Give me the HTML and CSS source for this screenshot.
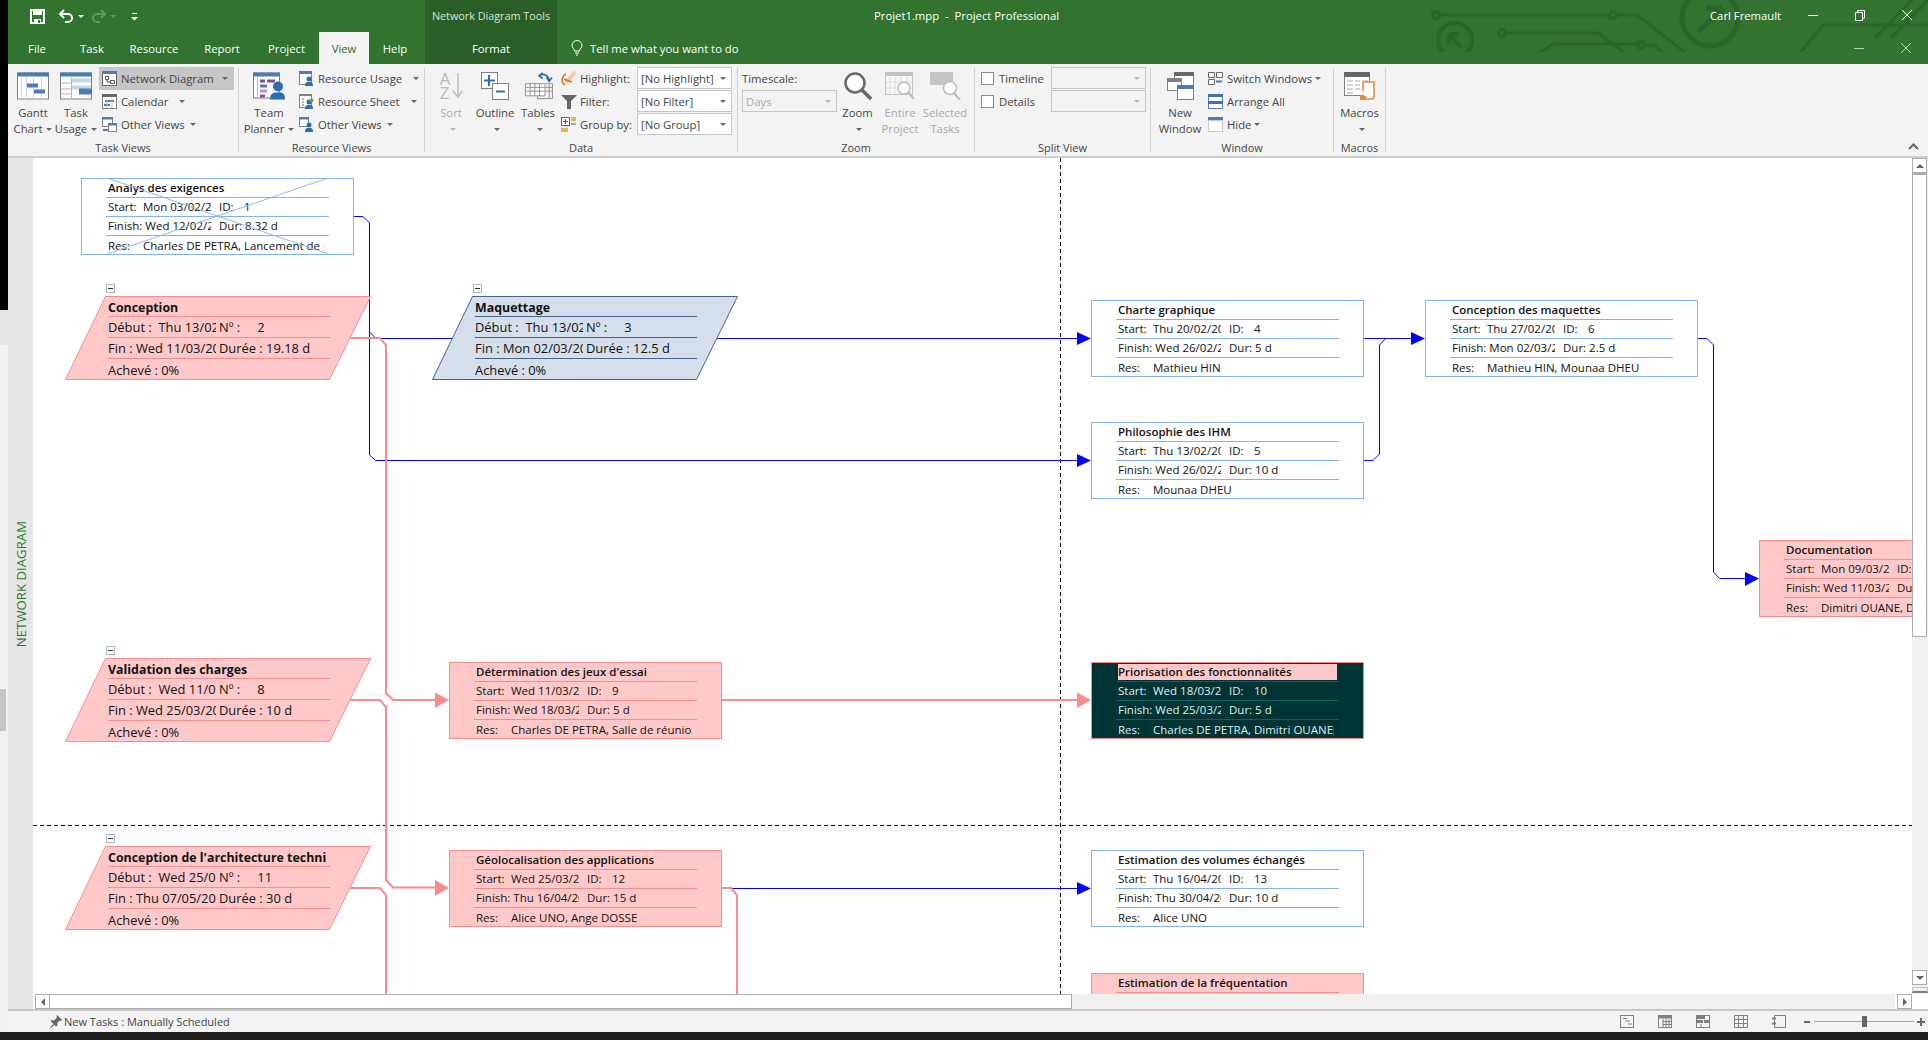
FILE: index.html
```html
<!DOCTYPE html>
<html lang="en">
<head>
<meta charset="utf-8">
<title>Projet1.mpp - Project Professional</title>
<link rel="stylesheet" href="styles.css">
</head>
<body>
<div class="screen">
  <div class="edge"><div class="edge-black"></div><div class="edge-pale"></div><div class="edge-thumb"></div></div>
  <div class="window">

    <!-- title bar + tabs -->
    <header class="chrome">
      <svg class="circuit" width="1920" height="52" viewBox="8 0 1920 52" fill="none" stroke="#2b652a" stroke-width="3">
        <circle cx="1436" cy="15" r="3.5"/><path d="M1440 15H1609"/><circle cx="1613" cy="15" r="3.5"/><path d="M1617 15H1637L1687 54"/>
        <circle cx="1455" cy="40" r="17" stroke-width="4"/><path d="M1449 34L1462 48M1449 34V44M1449 34H1459" stroke-width="4"/>
        <circle cx="1502" cy="33" r="3.5"/><path d="M1506 33H1598L1627 54"/>
        <path d="M1538 54L1553 44H1637"/><circle cx="1641" cy="45" r="3.5"/><path d="M1645 45H1654L1664 54"/>
        <circle cx="1710" cy="18" r="28" stroke-width="5"/><path d="M1698 32L1722 8M1722 8H1706M1722 8V22" stroke-width="5"/>
        <path d="M1799 54L1823 25H1928M1875 38L1912 0M1891 38L1928 0"/>
      </svg>
      <div class="qat">
        <svg class="qat-save" width="15" height="15" viewBox="0 0 15 15"><path d="M1 1H14V14H1Z" fill="none" stroke="#fff" stroke-width="2"/><path d="M3 1H12V6H3ZM4 10H11V14H4Z" fill="#fff"/><path d="M8 11H10V14H8Z" fill="#327231"/></svg>
        <svg class="qat-undo" width="15" height="14" viewBox="0 0 15 14" fill="none" stroke="#fff" stroke-width="2"><path d="M5 1L1 5L5 9M1 5H9A4 4 0 0 1 9 13H6"/></svg>
        <span class="caret caret-white"></span>
        <svg class="qat-redo" width="15" height="14" viewBox="0 0 15 14" fill="none" stroke="#5f9a5d" stroke-width="2"><path d="M10 1L14 5L10 9M14 5H6A4 4 0 0 0 6 13H9"/></svg>
        <span class="caret caret-dim"></span>
        <svg class="qat-more" width="7" height="9" viewBox="0 0 7 9" fill="#fff"><path d="M1 1H6V2H1ZM0 5H7L3.500 8.500Z"/></svg>
      </div>
      <nav class="tabs">
        <span class="tab">File</span><span class="tab">Task</span><span class="tab">Resource</span><span class="tab">Report</span><span class="tab">Project</span><span class="tab tab-on">View</span><span class="tab">Help</span>
      </nav>
      <div class="context">
        <div class="context-name">Network Diagram Tools</div>
        <div class="context-tab">Format</div>
      </div>
      <div class="title-row">
        <span class="doc-title">Projet1.mpp&nbsp; - &nbsp;Project Professional</span>
        <span class="user">Carl Fremault</span>
        <svg class="win-btn win-min" width="12" height="12" viewBox="0 0 12 12" stroke="#fff"><path d="M1 6.500H11"/></svg>
        <svg class="win-btn win-rest" width="12" height="12" viewBox="0 0 12 12" fill="none" stroke="#fff"><path d="M1.500 3.500H8.500V11.500H1.500ZM3.500 3.500V1.500H10.500V9H8.500"/></svg>
        <svg class="win-btn win-close" width="12" height="12" viewBox="0 0 12 12" stroke="#fff"><path d="M1 1L11 11M11 1L1 11"/></svg>
      </div>
      <div class="tell-row">
        <svg class="bulb" width="12" height="16" viewBox="0 0 12 16" fill="none" stroke="#fff"><path d="M3.500 11C3.500 8.500 1 8 1 5.500A5 5 0 0 1 11 5.500C11 8 8.500 8.500 8.500 11ZM4 13H8M5 15H7"/></svg>
        <span class="tell">Tell me what you want to do</span>
        <svg class="doc-min" width="12" height="12" viewBox="0 0 12 12" stroke="#b9cfb8"><path d="M1 6.500H11"/></svg>
        <svg class="doc-close" width="12" height="12" viewBox="0 0 12 12" stroke="#b9cfb8"><path d="M1 1L11 11M11 1L1 11"/></svg>
      </div>
    </header>

    <!-- ribbon -->
    <section class="ribbon">
      <div class="group g-task">
        <div class="group-body">
          <div class="big w50">
            <svg class="big-ico" width="32" height="27" viewBox="0 0 32 27"><rect x=".5" y=".5" width="31" height="26" fill="#fff" stroke="#808080"/><path d="M0 0H32V4H0Z" fill="#4a7db5"/><path d="M4.500 5V26M9.500 5V26M16.500 5V26M24.500 5V26" stroke="#c9d6e6"/><path d="M10 11H21V15H10ZM17 17H28V21H17Z" fill="#4a7db5"/></svg>
            <span class="big-label">Gantt<br>Chart<i class="caret"></i></span>
          </div>
          <div class="big w36">
            <svg class="big-ico" width="32" height="27" viewBox="0 0 32 27"><rect x=".5" y=".5" width="31" height="26" fill="#fff" stroke="#808080"/><path d="M0 0H32V4H0Z" fill="#4a7db5"/><path d="M12 6H31V10H12ZM12 13H31V17H12Z" fill="#c5d9ee"/><path d="M19 16H32V22H19Z" fill="#4a7db5"/><path d="M11.500 5V26M1 10.500H11M1 16.500H11M1 21.500H11" stroke="#b5b5b5"/></svg>
            <span class="big-label">Task<br>Usage<i class="caret"></i></span>
          </div>
          <div class="small-col w135 ml5">
            <div class="item item-on pl3">
              <svg width="15" height="15" viewBox="0 0 15 15"><rect x=".5" y=".5" width="14" height="14" fill="#fff" stroke="#666"/><path d="M0 0H15V3H0Z" fill="#4a7db5"/><path d="M3.500 5.500H6.500V8.500H3.500ZM8.500 9.500H12.500V12.500H8.500ZM5 9V11H8.500" fill="none" stroke="#555"/></svg>
              <span>Network Diagram</span><i class="caret push"></i>
            </div>
            <div class="item pl3">
              <svg width="15" height="15" viewBox="0 0 15 15"><rect x=".5" y=".5" width="14" height="14" fill="#fff" stroke="#808080"/><path d="M0 0H15V3H0Z" fill="#666"/><path d="M3 6H12V8H3ZM2 10H8V12H2Z" fill="#4a7db5"/><path d="M5 4V14M10 4V14" stroke="#bbb"/></svg>
              <span>Calendar</span><i class="caret sp10"></i>
            </div>
            <div class="item pl3">
              <svg width="15" height="15" viewBox="0 0 15 15"><rect x=".5" y=".5" width="10" height="9" fill="#fff" stroke="#808080"/><path d="M0 0H11V2.500H0Z" fill="#4a7db5"/><rect x="6.500" y="6.500" width="8" height="8" fill="#fff" stroke="#808080"/><path d="M6 6H15V8.500H6ZM1 12H6V14H1Z" fill="#4a7db5"/></svg>
              <span>Other Views</span><i class="caret sp4"></i>
            </div>
          </div>
        </div>
        <div class="group-label">Task Views</div>
      </div>

      <div class="group g-res">
        <div class="group-body">
          <div class="big w60">
            <svg class="big-ico" width="32" height="27" viewBox="0 0 32 27"><rect x=".5" y=".5" width="26" height="25" fill="#fff" stroke="#808080"/><path d="M0 0H27V4H0Z" fill="#4a7db5"/><path d="M7 7H12V10H7ZM14 7H22V10H14Z" fill="#7b4ea3"/><path d="M7 12H14V15H7Z" fill="#4a7db5"/><path d="M7 17H14V20H7Z" fill="#c98bd0"/><path d="M7 22H12V25H7Z" fill="#7b4ea3"/><path d="M4.500 5V25" stroke="#bbb"/><circle cx="25" cy="14" r="5" fill="#2f6cab"/><path d="M17 27C17 20 21 20 25 20S32 20 32 27Z" fill="#2f6cab"/></svg>
            <span class="big-label">Team<br>Planner<i class="caret"></i></span>
          </div>
          <div class="small-col back2 pl2">
            <div class="item">
              <svg width="15" height="15" viewBox="0 0 15 15"><rect x=".5" y=".5" width="12" height="13" fill="#fff" stroke="#808080"/><path d="M0 0H13V3H0Z" fill="#4a7db5"/><circle cx="10" cy="8" r="2.500" fill="#2f6cab"/><path d="M6 15C6 11 8 11 10 11S14 11 14 15Z" fill="#2f6cab"/></svg>
              <span>Resource Usage</span><i class="caret sp10"></i>
            </div>
            <div class="item">
              <svg width="15" height="15" viewBox="0 0 15 15"><rect x=".5" y=".5" width="12" height="13" fill="#fff" stroke="#808080"/><path d="M0 0H13V2H0Z" fill="#808080"/><circle cx="10" cy="8" r="2.500" fill="#2f6cab"/><circle cx="12.500" cy="6.500" r="2" fill="#5aa469"/><path d="M6 15C6 11 8 11 10 11S14 11 14 15Z" fill="#2f6cab"/><path d="M3 5H5M3 8H5M3 11H5" stroke="#666"/></svg>
              <span>Resource Sheet</span><i class="caret sp10"></i>
            </div>
            <div class="item">
              <svg width="15" height="15" viewBox="0 0 15 15"><rect x=".5" y=".5" width="9" height="9" fill="#fff" stroke="#808080"/><path d="M0 0H10V2.500H0Z" fill="#4a7db5"/><circle cx="10" cy="8" r="2.500" fill="#2f6cab"/><path d="M6 15C6 11 8 11 10 11S14 11 14 15Z" fill="#2f6cab"/></svg>
              <span>Other Views</span><i class="caret sp4"></i>
            </div>
          </div>
        </div>
        <div class="group-label">Resource Views</div>
      </div>

      <div class="group g-data">
        <div class="group-body">
          <div class="big w52 off">
            <svg class="big-ico" width="24" height="30" viewBox="0 0 24 30"><text x="0" y="14" class="az">A</text><text x="0" y="29" class="az">Z</text><path d="M19.500 1V26M14 20L19.500 27L24 20" fill="none" stroke="#b9b9b9" stroke-width="1.500"/></svg>
            <span class="big-label">Sort<br><i class="caret caret-off"></i></span>
          </div>
          <div class="big w36">
            <svg class="big-ico" width="28" height="28" viewBox="0 0 28 28"><rect x=".5" y=".5" width="16" height="16" fill="#fff" stroke="#808080"/><path d="M8 3V14M3 8.500H14" stroke="#2f6cab" stroke-width="2"/><rect x="11.500" y="11.500" width="16" height="16" fill="#fff" stroke="#808080"/><path d="M15 19.500H24" stroke="#2f6cab" stroke-width="2"/></svg>
            <span class="big-label">Outline<br><i class="caret"></i></span>
          </div>
          <div class="big w50">
            <svg class="big-ico" width="31" height="30" viewBox="0 0 31 30"><path d="M1.500 12.500H22.500V25.500H1.500ZM1.500 16.500H22.500M1.500 20.500H22.500M6.500 12.500V25.500M11.500 12.500V25.500M16.500 12.500V25.500" fill="#fff" stroke="#8c8c8c"/><path d="M23.500 12.500H30.500V28.500H14.500V25.500M23.500 16.500H30.500M23.500 20.500H30.500M27 13V28" fill="none" stroke="#8c8c8c"/><path d="M16 4C21 1 26 3 27 9M24 6L27 10L30 6M20 1L16 4L20 7" fill="none" stroke="#2f6cab" stroke-width="1.800"/></svg>
            <span class="big-label">Tables<br><i class="caret"></i></span>
          </div>
          <div class="small-col back2 w76">
            <div class="item tight">
              <svg width="16" height="15" viewBox="0 0 16 15" fill="none"><path d="M5 12L14 1" stroke="#f0c9a0" stroke-width="4"/><path d="M5 3C0 6 0 12 4 14" stroke="#e0702c" stroke-width="1.500"/><path d="M3 8L11 11" stroke="#e0702c" stroke-width="1.500"/></svg>
              <span>Highlight:</span>
            </div>
            <div class="item tight">
              <svg width="16" height="15" viewBox="0 0 16 15"><path d="M0 1H16L10 7V15H6V7Z" fill="#666"/></svg>
              <span>Filter:</span>
            </div>
            <div class="item tight">
              <svg width="16" height="15" viewBox="0 0 16 15"><rect x=".5" y=".5" width="8" height="8" fill="#fff" stroke="#666"/><path d="M4.500 2V7M2 4.500H7" stroke="#555"/><path d="M10 0H15V4H10ZM0 11H7V15H0Z" fill="#e5b45c"/><path d="M10 7H15" stroke="#555"/></svg>
              <span>Group by:</span>
            </div>
          </div>
          <div class="combo-col">
            <div class="combo on"><span>[No Highlight]</span><i class="caret push"></i></div>
            <div class="combo on"><span>[No Filter]</span><i class="caret push"></i></div>
            <div class="combo on"><span>[No Group]</span><i class="caret push"></i></div>
          </div>
        </div>
        <div class="group-label">Data</div>
      </div>

      <div class="group g-zoom">
        <div class="group-body">
          <div class="scale-col">
            <div class="item scale-label"><span>Timescale:</span></div>
            <div class="combo dis"><span>Days</span><i class="caret caret-off push"></i></div>
          </div>
          <div class="big w41">
            <svg class="big-ico" width="28" height="28" viewBox="0 0 28 28" fill="none"><circle cx="11" cy="11" r="9.500" stroke="#666" stroke-width="2.500" fill="#fff"/><path d="M18 18L27 27" stroke="#666" stroke-width="3.500"/></svg>
            <span class="big-label">Zoom<br><i class="caret"></i></span>
          </div>
          <div class="big w44 off">
            <svg class="big-ico" width="30" height="28" viewBox="0 0 30 28" fill="none"><rect x=".5" y=".5" width="27" height="22" fill="#f7f7f7" stroke="#c4c4c4"/><path d="M0 0H28V4H0Z" fill="#c4c4c4"/><path d="M5 5V22M10 5V22M16 5V22M22 5V22M1 10H27M1 16H27" stroke="#dedede"/><circle cx="19" cy="16" r="6" fill="#fff" stroke="#bdbdbd" stroke-width="1.500"/><path d="M23 20L29 27" stroke="#bdbdbd" stroke-width="2"/></svg>
            <span class="big-label">Entire<br>Project</span>
          </div>
          <div class="big w46 off">
            <svg class="big-ico" width="31" height="28" viewBox="0 0 31 28" fill="none"><path d="M0 0H23V13H0Z" fill="#c4c4c4"/><circle cx="20" cy="16" r="6.500" fill="#fff" stroke="#bdbdbd" stroke-width="1.500"/><path d="M24 21L30 28" stroke="#bdbdbd" stroke-width="2"/></svg>
            <span class="big-label">Selected<br>Tasks</span>
          </div>
        </div>
        <div class="group-label">Zoom</div>
      </div>

      <div class="group g-split">
        <div class="group-body">
          <div class="check-col">
            <div class="item"><i class="check"></i><span>Timeline</span></div>
            <div class="item"><i class="check"></i><span>Details</span></div>
          </div>
          <div class="combo-col">
            <div class="combo dis"><i class="caret caret-off push"></i></div>
            <div class="combo dis"><i class="caret caret-off push"></i></div>
          </div>
        </div>
        <div class="group-label">Split View</div>
      </div>

      <div class="group g-window">
        <div class="group-body">
          <div class="big w58">
            <svg class="big-ico" width="27" height="28" viewBox="0 0 27 28"><rect x="7.500" y=".5" width="19" height="14" fill="#fff" stroke="#808080"/><path d="M7 0H27V4H7Z" fill="#666"/><rect x=".5" y="6.500" width="14" height="12" fill="#fff" stroke="#808080"/><path d="M0 6H15V10H0Z" fill="#808080"/><rect x="10.500" y="13.500" width="16" height="14" fill="#fff" stroke="#808080"/><path d="M10 13H27V17H10Z" fill="#4a7db5"/></svg>
            <span class="big-label">New<br>Window</span>
          </div>
          <div class="small-col back1">
            <div class="item">
              <svg width="15" height="15" viewBox="0 0 15 15" fill="#fff" stroke="#666"><path d="M.5 1.500H6.500V6.500H.5ZM8.500 1.500H14.500V6.500H8.500ZM.5 8.500H6.500V13.500H.5Z"/><path d="M8 10.500H14" stroke="#4a7db5" stroke-width="2"/></svg>
              <span>Switch Windows</span><i class="caret sp2"></i>
            </div>
            <div class="item">
              <svg width="15" height="15" viewBox="0 0 15 15"><rect x=".5" y=".5" width="14" height="14" fill="#fff" stroke="#4a7db5"/><path d="M0 0H15V3H0ZM0 7H15V10H0Z" fill="#3d73ad"/></svg>
              <span>Arrange All</span>
            </div>
            <div class="item">
              <svg width="15" height="15" viewBox="0 0 15 15"><path d="M0 0H15V3H0Z" fill="#4a7db5"/><rect x=".5" y="3.500" width="14" height="11" fill="#fff" stroke="#999" stroke-dasharray="1 1"/></svg>
              <span>Hide</span><i class="caret sp2"></i>
            </div>
          </div>
        </div>
        <div class="group-label">Window</div>
      </div>

      <div class="group g-macros">
        <div class="group-body">
          <div class="big w51">
            <svg class="big-ico" width="31" height="28" viewBox="0 0 31 28"><rect x=".5" y=".5" width="25" height="23" fill="#fff" stroke="#808080"/><path d="M0 0H26V5H0Z" fill="#666"/><path d="M3 9H9M11 9H16M18 9H24M3 13H9M11 13H16M18 13H24M3 17H9M11 17H16M3 21H9" stroke="#aaa"/><path d="M19 19V12C19 10 20 10 21 10H30V24C30 26 29 27 27 27H17V24H20" fill="#fff" stroke="#e8893a" stroke-width="1.500"/><path d="M16 24H22V28H16Z" fill="#e8893a"/></svg>
            <span class="big-label">Macros<br><i class="caret"></i></span>
          </div>
        </div>
        <div class="group-label">Macros</div>
      </div>

      <svg class="collapse-ribbon" width="11" height="7" viewBox="0 0 11 7" fill="none" stroke="#666" stroke-width="2"><path d="M1 6L5.500 1.500L10 6"/></svg>
    </section>

    <!-- network diagram -->
    <main class="workspace">
      <div class="sidebar"><span class="sidebar-text">NETWORK DIAGRAM</span></div>
      <div class="work-col">
        <div class="view">
          <div class="canvas">
            <svg class="wires" width="1879" height="836" viewBox="33 158 1879 836" fill="none">
              <g stroke="#000" stroke-dasharray="4 3">
                <path d="M1060.500 158V994"/>
                <path d="M33 825.500H1912"/>
              </g>
              <g stroke="#0000ff">
                <path d="M353 216.500H363L369.500 223V455L375.500 460.500H1080"/>
                <path d="M369.500 332L376 338.500H453"/>
                <path d="M717 338.500H1080"/>
                <path d="M1364 338.500H1414"/>
                <path d="M1364 460.500H1373L1379.500 454V345L1385.500 338.500"/>
                <path d="M1698 338.500H1707L1713.500 345V572L1719.500 578.500H1748"/>
                <path d="M732 888.500H1080"/>
              </g>
              <g fill="#0000ff">
                <path d="M1077 332L1091 338.500L1077 345Z"/>
                <path d="M1077 454L1091 460.500L1077 467Z"/>
                <path d="M1411 332L1425 338.500L1411 345Z"/>
                <path d="M1745 572L1759 578.500L1745 586Z"/>
                <path d="M1077 882L1091 888.500L1077 895Z"/>
              </g>
              <g stroke="#f88b8b" stroke-width="2">
                <path d="M349 338H380L386 345V693L393 700H438"/>
                <path d="M349 700H380L386 707V880L393 887.500H438"/>
                <path d="M349 888H380L386 895V994"/>
                <path d="M722 700H1080"/>
                <path d="M722 888H731L737 895V994"/>
              </g>
              <g fill="#f88b8b">
                <path d="M435 692.500L449 700L435 708Z"/>
                <path d="M435 880L449 888L435 896Z"/>
                <path d="M1077 692.500L1091 700L1077 708Z"/>
              </g>
            </svg>

            <div class="node node-blue n-analys">
              <svg class="cross" width="221" height="76" viewBox="0 0 221 76" stroke="#8fbce9"><path d="M0 0L221 76M221 0L0 76"/></svg>
              <div class="row row-title">Analys des exigences</div>
              <div class="row"><span class="c1"><span class="lab">Start:</span> Mon 03/02/2020</span><span class="c2"><span class="lab">ID:</span> 1</span></div>
              <div class="row"><span class="c1"><span class="lab">Finish:</span> Wed 12/02/2020</span><span class="c2"><span class="lab">Dur:</span> 8.32 d</span></div>
              <div class="row"><span class="c-full"><span class="lab">Res:</span> Charles DE PETRA, Lancement de projet</span></div>
            </div>

            <div class="para para-red n-conception">
              <i class="minus"></i>
              <svg class="para-shape" width="306" height="84" viewBox="0 0 306 84"><path d="M40.500 .5H305.500L264.500 83.500H.5Z"/></svg>
              <div class="p-row p-title">Conception</div>
              <div class="p-row"><span class="p1">Début :&nbsp; Thu 13/02/2020</span><span class="p2"><span class="plab">Nº :</span> 2</span></div>
              <div class="p-row"><span class="p1">Fin : Wed 11/03/2020</span><span class="p2">Durée : 19.18 d</span></div>
              <div class="p-row">Achevé : 0%</div>
            </div>

            <div class="para para-navy n-maquettage">
              <i class="minus"></i>
              <svg class="para-shape" width="306" height="84" viewBox="0 0 306 84"><path d="M40.500 .5H305.500L264.500 83.500H.5Z"/></svg>
              <div class="p-row p-title">Maquettage</div>
              <div class="p-row"><span class="p1">Début :&nbsp; Thu 13/02/2020</span><span class="p2"><span class="plab">Nº :</span> 3</span></div>
              <div class="p-row"><span class="p1">Fin : Mon 02/03/2020</span><span class="p2">Durée : 12.5 d</span></div>
              <div class="p-row">Achevé : 0%</div>
            </div>

            <div class="node node-blue n-charte">
              <div class="row row-title">Charte graphique</div>
              <div class="row"><span class="c1"><span class="lab">Start:</span> Thu 20/02/2020</span><span class="c2"><span class="lab">ID:</span> 4</span></div>
              <div class="row"><span class="c1"><span class="lab">Finish:</span> Wed 26/02/2020</span><span class="c2"><span class="lab">Dur:</span> 5 d</span></div>
              <div class="row"><span class="c-full"><span class="lab">Res:</span> Mathieu HIN</span></div>
            </div>

            <div class="node node-blue n-maquettes">
              <div class="row row-title">Conception des maquettes</div>
              <div class="row"><span class="c1"><span class="lab">Start:</span> Thu 27/02/2020</span><span class="c2"><span class="lab">ID:</span> 6</span></div>
              <div class="row"><span class="c1"><span class="lab">Finish:</span> Mon 02/03/2020</span><span class="c2"><span class="lab">Dur:</span> 2.5 d</span></div>
              <div class="row"><span class="c-full"><span class="lab">Res:</span> Mathieu HIN, Mounaa DHEU</span></div>
            </div>

            <div class="node node-blue n-philo">
              <div class="row row-title">Philosophie des IHM</div>
              <div class="row"><span class="c1"><span class="lab">Start:</span> Thu 13/02/2020</span><span class="c2"><span class="lab">ID:</span> 5</span></div>
              <div class="row"><span class="c1"><span class="lab">Finish:</span> Wed 26/02/2020</span><span class="c2"><span class="lab">Dur:</span> 10 d</span></div>
              <div class="row"><span class="c-full"><span class="lab">Res:</span> Mounaa DHEU</span></div>
            </div>

            <div class="node node-red n-doc">
              <div class="row row-title">Documentation</div>
              <div class="row"><span class="c1"><span class="lab">Start:</span> Mon 09/03/2020</span><span class="c2"><span class="lab">ID:</span> 7</span></div>
              <div class="row"><span class="c1"><span class="lab">Finish:</span> Wed 11/03/2020</span><span class="c2"><span class="lab">Dur:</span> 2 d</span></div>
              <div class="row"><span class="c-full"><span class="lab">Res:</span> Dimitri OUANE, D</span></div>
            </div>

            <div class="para para-red n-validation">
              <i class="minus"></i>
              <svg class="para-shape" width="306" height="84" viewBox="0 0 306 84"><path d="M40.500 .5H305.500L264.500 83.500H.5Z"/></svg>
              <div class="p-row p-title">Validation des charges</div>
              <div class="p-row"><span class="p1">Début :&nbsp; Wed 11/03/2020</span><span class="p2"><span class="plab">Nº :</span> 8</span></div>
              <div class="p-row"><span class="p1">Fin : Wed 25/03/2020</span><span class="p2">Durée : 10 d</span></div>
              <div class="p-row">Achevé : 0%</div>
            </div>

            <div class="node node-red n-determination">
              <div class="row row-title">Détermination des jeux d'essai</div>
              <div class="row"><span class="c1"><span class="lab">Start:</span> Wed 11/03/2020</span><span class="c2"><span class="lab">ID:</span> 9</span></div>
              <div class="row"><span class="c1"><span class="lab">Finish:</span> Wed 18/03/2020</span><span class="c2"><span class="lab">Dur:</span> 5 d</span></div>
              <div class="row"><span class="c-full"><span class="lab">Res:</span> Charles DE PETRA, Salle de réunion</span></div>
            </div>

            <div class="node node-dark n-priorisation">
              <div class="row row-title"><span class="picked">Priorisation des fonctionnalités</span></div>
              <div class="row"><span class="c1"><span class="lab">Start:</span> Wed 18/03/2020</span><span class="c2"><span class="lab">ID:</span> 10</span></div>
              <div class="row"><span class="c1"><span class="lab">Finish:</span> Wed 25/03/2020</span><span class="c2"><span class="lab">Dur:</span> 5 d</span></div>
              <div class="row"><span class="c-full"><span class="lab">Res:</span> Charles DE PETRA, Dimitri OUANE[50%]</span></div>
            </div>

            <div class="para para-red n-archi">
              <i class="minus"></i>
              <svg class="para-shape" width="306" height="84" viewBox="0 0 306 84"><path d="M40.500 .5H305.500L264.500 83.500H.5Z"/></svg>
              <div class="p-row p-title"><span class="p-clip">Conception de l'architecture technique</span></div>
              <div class="p-row"><span class="p1">Début :&nbsp; Wed 25/03/2020</span><span class="p2"><span class="plab">Nº :</span> 11</span></div>
              <div class="p-row"><span class="p1">Fin : Thu 07/05/2020</span><span class="p2">Durée : 30 d</span></div>
              <div class="p-row">Achevé : 0%</div>
            </div>

            <div class="node node-red n-geoloc">
              <div class="row row-title">Géolocalisation des applications</div>
              <div class="row"><span class="c1"><span class="lab">Start:</span> Wed 25/03/2020</span><span class="c2"><span class="lab">ID:</span> 12</span></div>
              <div class="row"><span class="c1"><span class="lab">Finish:</span> Thu 16/04/2020</span><span class="c2"><span class="lab">Dur:</span> 15 d</span></div>
              <div class="row"><span class="c-full"><span class="lab">Res:</span> Alice UNO, Ange DOSSE</span></div>
            </div>

            <div class="node node-blue n-volumes">
              <div class="row row-title">Estimation des volumes échangés</div>
              <div class="row"><span class="c1"><span class="lab">Start:</span> Thu 16/04/2020</span><span class="c2"><span class="lab">ID:</span> 13</span></div>
              <div class="row"><span class="c1"><span class="lab">Finish:</span> Thu 30/04/2020</span><span class="c2"><span class="lab">Dur:</span> 10 d</span></div>
              <div class="row"><span class="c-full"><span class="lab">Res:</span> Alice UNO</span></div>
            </div>

            <div class="node node-red n-frequentation">
              <div class="row row-title">Estimation de la fréquentation</div>
            </div>
          </div>
          <div class="vscroll">
            <div class="sb-btn"><i class="tri tri-up"></i></div>
            <div class="vthumb"></div>
            <div class="vtrough"></div>
            <div class="sb-btn"><i class="tri tri-down"></i></div>
            <div class="vsplit"></div>
          </div>
        </div>
        <div class="hscroll">
          <div class="sb-btn"><i class="tri tri-left"></i></div>
          <div class="hthumb"></div>
          <div class="htrough"></div>
          <div class="sb-btn sb-right"><i class="tri tri-right"></i></div>
        </div>
      </div>
    </main>

    <!-- status bar -->
    <footer class="statusbar">
      <svg class="pin" width="13" height="14" viewBox="0 0 13 14" fill="#666"><path d="M8 0L13 5L11.500 6L10.500 5.500L8 8.500L8.500 10.500L7 11.500L1.500 6L3 5L5 5.500L8 2.500L7.500 1ZM4 9L0 14L5 10.500Z"/></svg>
      <span class="status-text">New Tasks : Manually Scheduled</span>
      <div class="status-views">
        <svg width="14" height="13" viewBox="0 0 14 13" fill="none" stroke="#808080"><rect x=".5" y=".5" width="13" height="12"/><path d="M3 3.500H7M5 6H10M8 9H12"/></svg>
        <svg width="14" height="13" viewBox="0 0 14 13" fill="none" stroke="#808080"><rect x=".5" y=".5" width="13" height="12"/><path d="M0 2H14" stroke-width="3"/><path d="M5 4V12M8 4V12M11 4V12M5 6.500H13M5 9.500H13"/></svg>
        <svg width="14" height="13" viewBox="0 0 14 13" fill="none" stroke="#808080"><rect x=".5" y=".5" width="13" height="12"/><path d="M1 1H9V4H1ZM8 5H13V8H8ZM1 5H7V8H1Z" fill="#808080" stroke="none"/><path d="M5 9V12"/></svg>
        <svg width="14" height="13" viewBox="0 0 14 13" fill="none" stroke="#808080"><path d="M.5 .5H13.500V12.500H.5ZM4.500 .5V12.500M9.500 .5V12.500M.5 4.500H13.500M.5 8.500H13.500"/></svg>
        <svg width="14" height="13" viewBox="0 0 14 13" fill="none" stroke="#808080"><path d="M2.500 .5H13.500V12.500H2.500Z"/><path d="M0 3.500H4M0 8.500H4" stroke-width="2"/></svg>
      </div>
      <div class="zoom-slider">
        <i class="zoom-minus"></i>
        <div class="zoom-track"><i class="zoom-thumb"></i></div>
        <i class="zoom-plus"></i>
      </div>
    </footer>
  </div>
</div>
<div class="taskbar"></div>
</body>
</html>
```

FILE: styles.css
```css
* {
  box-sizing: border-box;
}

html,
body {
  margin: 0;
  height: 100%;
  overflow: hidden;
}

body {
  font-family: "Open Sans", "Noto Sans", sans-serif;
  font-size: 11.3px;
  color: #444;
  background: #1f1f1f;
}

i {
  font-style: normal;
}

svg {
  display: block;
  flex: none;
}

.screen {
  display: flex;
  height: 1032px;
}

.taskbar {
  height: 8px;
  background: #1f1f1f;
}

.edge {
  width: 8px;
  background: #f1f1f1;
}

.edge-black {
  height: 310px;
  background: #000;
}

.edge-pale {
  height: 35px;
  background: #e4e7ea;
}

.edge-thumb {
  width: 6px;
  height: 42px;
  margin-top: 344px;
  background: #c5c5c5;
}

.window {
  flex: 1;
  display: flex;
  flex-direction: column;
  min-width: 0;
}

/* title bar */
.chrome {
  position: relative;
  display: grid;
  grid-template-columns: 417px 132px 1fr;
  grid-template-rows: 32px 32px;
  height: 64px;
  background: #327330;
  color: #fff;
}

.circuit {
  position: absolute;
  left: 0;
  top: 0;
}

.qat {
  position: relative;
  display: flex;
  align-items: center;
  padding-left: 22px;
}

.qat-undo {
  margin-left: 14px;
}

.qat-redo {
  margin-left: 7px;
}

.caret {
  display: inline-block;
  width: 0;
  height: 0;
  margin-left: 4px;
  vertical-align: 2px;
  border-style: solid;
  border-width: 3px 3px 0;
  border-color: #666 transparent transparent;
}

.caret-white {
  border-top-color: #fff;
}

.caret-dim {
  border-top-color: #5f9a5d;
}

.caret-off {
  border-top-color: #b5b5b5;
}

.qat-more {
  margin-left: 15px;
}

.tabs {
  position: relative;
  display: grid;
  grid-template-columns: 58px 52px 72px 64px 65px 50px 52px;
  align-items: stretch;
}

.tab {
  display: flex;
  align-items: center;
  justify-content: center;
}

.tab-on {
  background: #f3f3f3;
  color: #2f6f2d;
}

.context {
  position: relative;
  grid-column: 2;
  grid-row: 1 / 3;
  display: grid;
  grid-template-rows: 32px 32px;
  background: #2a5e27;
  text-align: center;
}

.context-name {
  font-size: 10.8px;
  line-height: 32px;
  color: #d5e3d4;
  white-space: nowrap;
}

.context-tab {
  line-height: 34px;
}

.title-row {
  position: relative;
  grid-column: 3;
  grid-row: 1;
  display: flex;
  align-items: center;
  padding: 0 0 2px 317px;
}

.doc-title {
  width: 186px;
  white-space: nowrap;
}

.user {
  margin-left: 650px;
  white-space: nowrap;
}

.win-min {
  margin-left: 26px;
}

.win-rest {
  margin-left: 35px;
}

.win-close {
  margin-left: 35px;
}

.tell-row {
  position: relative;
  grid-column: 3;
  grid-row: 2;
  display: flex;
  align-items: center;
  padding-left: 14px;
}

.tell {
  margin-left: 7px;
  width: 149px;
  white-space: nowrap;
}

.doc-min {
  margin-left: 1114px;
}

.doc-close {
  margin-left: 35px;
}

/* ribbon */
.ribbon {
  position: relative;
  display: flex;
  align-items: flex-start;
  height: 94px;
  background: #f3f3f3;
  border-bottom: 2px solid #d0d0d0;
}

.group {
  height: 84px;
  margin-top: 4px;
  border-right: 1px solid #d0d0d0;
  display: grid;
  grid-template-rows: 72px 16px;
}

.group-body {
  display: flex;
}

.group-label {
  text-align: center;
  font-size: 11px;
  line-height: 16px;
  white-space: nowrap;
}

.g-task {
  width: 231px;
}

.g-res {
  width: 186px;
}

.g-data {
  width: 313px;
}

.g-zoom {
  width: 237px;
}

.g-split {
  width: 176px;
}

.g-window {
  width: 183px;
}

.g-macros {
  width: 52px;
}

.big {
  display: flex;
  flex-direction: column;
  align-items: center;
  padding-top: 4px;
  text-align: center;
  white-space: nowrap;
}

.big-ico {
  height: 33px;
  padding-bottom: 5px;
}

.big-label {
  line-height: 16px;
}

.w36 {
  width: 36px;
}

.w41 {
  width: 41px;
}

.w44 {
  width: 44px;
}

.w46 {
  width: 46px;
}

.w50 {
  width: 50px;
}

.w51 {
  width: 51px;
}

.w52 {
  width: 52px;
}

.w58 {
  width: 58px;
}

.w60 {
  width: 60px;
}

.w76 {
  width: 76px;
}

.w135 {
  width: 135px;
}

.ml5 {
  margin-left: 5px;
}

.pl2 {
  padding-left: 2px;
}

.pl3 {
  padding-left: 3px;
}

.off {
  color: #a9a9a9;
}

.az {
  font-size: 18px;
  fill: #b9b9b9;
}

.small-col {
  margin-top: -1px;
}

.back1 {
  margin-left: -1px;
}

.back2 {
  margin-left: -2px;
}

.item {
  display: flex;
  align-items: center;
  gap: 4px;
  height: 23px;
  white-space: nowrap;
}

.item .caret {
  flex: none;
  margin-left: 0;
}

.item-on {
  background: #c6c6c6;
}

.tight {
  gap: 3px;
}

.push {
  margin-left: auto !important;
}

.sp2 {
  margin-left: -1px !important;
}

.sp4 {
  margin-left: 1px !important;
}

.sp10 {
  margin-left: 7px !important;
}

.item-on .caret {
  margin-right: 6px;
}

.combo-col {
  width: 95px;
  margin-top: -1px;
}

.combo {
  display: flex;
  align-items: center;
  height: 22px;
  margin-bottom: 1px;
  padding: 0 5px 0 3px;
  border: 1px solid #c6c6c6;
  white-space: nowrap;
}

.combo .caret {
  flex: none;
}

.combo.on {
  background: #fff;
}

.combo.dis {
  color: #a9a9a9;
}

.scale-col {
  width: 95px;
  margin: -1px 0 0 4px;
}

.scale-col .item {
  gap: 0;
}

.check-col {
  width: 76px;
  margin-top: -1px;
  padding-left: 6px;
}

.check {
  flex: none;
  width: 13px;
  height: 13px;
  margin-right: 1px;
  background: #fff;
  border: 1px solid #8a8a8a;
}

.g-split .combo-col {
  width: 95px;
}

.collapse-ribbon {
  margin: 79px 0 0 522px;
}

/* workspace */
.workspace {
  flex: 1;
  display: flex;
  min-height: 0;
}

.sidebar {
  display: flex;
  justify-content: center;
  align-items: flex-end;
  width: 25px;
  padding: 0 0 362px;
  background: #e6e6e6;
}

.sidebar-text {
  writing-mode: vertical-rl;
  transform: rotate(180deg);
  color: #2f7a2d;
  font-size: 13.2px;
  white-space: nowrap;
}

.work-col {
  flex: 1;
  display: flex;
  flex-direction: column;
  min-width: 0;
  background: #fff;
}

.view {
  display: flex;
  height: 836px;
}

.canvas {
  position: relative;
  flex: 1;
  overflow: hidden;
  background: #fff;
  color: #111;
}

.wires {
  position: absolute;
  left: 0;
  top: 0;
}

/* rectangle nodes */
.node {
  position: absolute;
  width: 273px;
  height: 77px;
  padding: 0 24px;
  border: 1px solid #7fb5ec;
  font-size: 11.5px;
  background: #fff;
}

.node-blue .row {
  border-bottom-color: #7fb5ec;
}

.node-red {
  background: #ffc9c9;
  border-color: #f88b8b;
}

.node-red .row {
  border-bottom-color: #f88b8b;
}

.node-dark {
  background: #003333;
  border-color: #f88b8b;
  color: #d9f2f2;
}

.node-dark .row {
  border-bottom-color: #006666;
}

.row {
  display: flex;
  align-items: center;
  height: 19px;
  padding: 0 0 1px 2px;
  border-bottom: 1px solid;
  white-space: nowrap;
  overflow: hidden;
}

.row:last-child {
  border-bottom: 0;
}

.row-title {
  font-size: 11.5px;
  font-weight: 600;
}

.n-frequentation .row:last-child {
  border-bottom: 1px solid #f88b8b;
}

.picked {
  display: block;
  width: 219px;
  line-height: 16px;
  background: #ffc9c9;
  color: #111;
}

.c1 {
  flex: none;
  width: 103px;
  margin-right: 8px;
  overflow: hidden;
}

.c2 {
  flex: 1;
  overflow: hidden;
}

.c-full {
  flex: none;
  width: 216px;
  overflow: hidden;
}

.lab {
  display: inline-block;
  min-width: 32px;
}

.c2 .lab {
  min-width: 22px;
}

.cross {
  position: absolute;
  left: 25px;
  top: -1px;
}

.n-analys {
  left: 48px;
  top: 20px;
}

.n-charte {
  left: 1058px;
  top: 142px;
}

.n-maquettes {
  left: 1392px;
  top: 142px;
}

.n-philo {
  left: 1058px;
  top: 264px;
}

.n-doc {
  left: 1726px;
  top: 382px;
}

.n-determination {
  left: 416px;
  top: 504px;
}

.n-priorisation {
  left: 1058px;
  top: 504px;
}

.n-geoloc {
  left: 416px;
  top: 692px;
}

.n-volumes {
  left: 1058px;
  top: 692px;
}

.n-frequentation {
  left: 1058px;
  top: 815px;
}

/* parallelogram nodes */
.para {
  position: absolute;
  width: 306px;
  height: 84px;
  padding: 0 41px 0 43px;
  font-size: 12.9px;
}

.para-shape {
  position: absolute;
  left: 0;
  top: 0;
}

.para-red .para-shape path {
  fill: #ffc9c9;
  stroke: #f88b8b;
}

.para-navy .para-shape path {
  fill: #d5dfeb;
  stroke: #44658f;
}

.para-red .p-row {
  border-bottom-color: #f88b8b;
}

.para-navy .p-row {
  border-bottom-color: #44658f;
}

.p-row {
  position: relative;
  display: flex;
  align-items: center;
  height: 21px;
  border-bottom: 1px solid;
  white-space: nowrap;
  overflow: hidden;
}

.p-row:last-child {
  border-bottom: 0;
}

.p-title {
  padding-top: 2px;
  font-size: 12.4px;
  font-weight: 700;
}

.p-clip {
  flex: none;
  width: 218px;
  overflow: hidden;
}

.p1 {
  flex: none;
  width: 108px;
  margin-right: 3px;
  overflow: hidden;
}

.p2 {
  flex: 1;
}

.plab {
  display: inline-block;
  min-width: 35px;
}

.minus {
  position: absolute;
  left: 41px;
  top: -12px;
  width: 9px;
  height: 9px;
  background: linear-gradient(#333, #333) center / 5px 1px no-repeat #fff;
  border: 1px solid #a9b6c9;
}

.n-conception {
  left: 32px;
  top: 138px;
}

.n-maquettage {
  left: 399px;
  top: 138px;
}

.n-validation {
  left: 32px;
  top: 500px;
}

.n-archi {
  left: 32px;
  top: 688px;
}

/* scrollbars */
.vscroll {
  display: flex;
  flex-direction: column;
  flex: none;
  width: 16px;
  background: #f1f1f1;
}

.sb-btn {
  display: flex;
  align-items: center;
  justify-content: center;
  flex: none;
  width: 15px;
  height: 15px;
  background: #fff;
  border: 1px solid #adadad;
}

.tri {
  width: 0;
  height: 0;
  border-style: solid;
  border-color: transparent;
}

.tri-up {
  border-width: 0 4px 4px;
  border-bottom-color: #666;
}

.tri-down {
  border-width: 4px 4px 0;
  border-top-color: #666;
}

.tri-left {
  border-width: 4px 4px 4px 0;
  border-right-color: #666;
}

.tri-right {
  border-width: 4px 0 4px 4px;
  border-left-color: #666;
}

.vthumb {
  width: 15px;
  height: 464px;
  background: #fff;
  border: 1px solid #adadad;
  border-top-width: 2px;
}

.vtrough {
  height: 333px;
}

.vsplit {
  width: 16px;
  height: 6px;
  margin-top: 2px;
  background: #efefef;
  border: 1px solid #c4c4c4;
  border-bottom: 2px solid #808080;
}

.hscroll {
  display: flex;
  height: 15px;
  padding-left: 2px;
}

.hthumb {
  width: 1022px;
  background: #fff;
  border: 1px solid #adadad;
  border-left: 0;
}

.htrough {
  width: 823px;
  background: #f1f1f1;
}

.sb-right {
  margin-left: 2px;
}

/* status bar */
.statusbar {
  display: flex;
  align-items: center;
  height: 23px;
  padding-left: 41px;
  background: #f3f3f3;
  border-top: 2px solid #c8c8c8;
  font-size: 11px;
}

.status-text {
  margin-left: 2px;
  white-space: nowrap;
}

.status-views {
  display: flex;
  gap: 24px;
  margin-left: auto;
}

.zoom-slider {
  display: flex;
  align-items: center;
  margin: 0 3px 0 18px;
}

.zoom-minus {
  width: 6px;
  height: 2px;
  background: #666;
}

.zoom-track {
  position: relative;
  width: 100px;
  height: 1px;
  margin: 0 3px 0 4px;
  background: #a6a6a6;
}

.zoom-thumb {
  position: absolute;
  left: 48px;
  top: -5px;
  width: 5px;
  height: 11px;
  background: #666;
}

.zoom-plus {
  width: 8px;
  height: 8px;
  background: linear-gradient(#666, #666) center / 8px 2px no-repeat, linear-gradient(#666, #666) center / 2px 8px no-repeat;
}
```
